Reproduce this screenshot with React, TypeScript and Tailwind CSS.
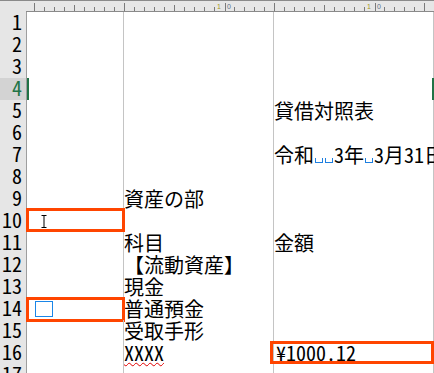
import React from "react";

const FONT = "font-['Noto_Sans_CJK_JP','Noto_Sans',sans-serif]";

function Ruler() {
  const ticks: { x: number; h: number }[] = [];
  for (let k = 0; k < 41; k++) {
    const x = 34 + k * 10 - (k >= 9 ? 0 : 0);
    let h = 4;
    if ([34, 124, 274, 424].includes(x)) h = 8;
    else if ([74, 174, 324].includes(x)) h = 6;
    if (x === 224 || x === 374) continue;
    ticks.push({ x: x === 34 ? 34 : x, h });
  }
  return (
    <svg width="434" height="12" className="block shrink-0">
      <rect x="0" y="0" width="434" height="12" fill="#e6e6e6" />
      <line x1="0" y1="0.5" x2="434" y2="0.5" stroke="#8a8a8a" />
      <line x1="26" y1="11.5" x2="434" y2="11.5" stroke="#8a8a8a" />
      {ticks.map((t) => (
        <line key={t.x} x1={t.x + 0.5} y1={11 - t.h} x2={t.x + 0.5} y2="11" stroke="#7a7a7a" />
      ))}
      {[225, 375].map((x) => (
        <g key={x}>
          <line x1={x + 0.5} y1="3" x2={x + 0.5} y2="11" stroke="#7a7a7a" />
          <text x={x - 8} y="9" fontSize="7" fill="#a89a20" fontFamily="Liberation Sans, sans-serif">1</text>
          <text x={x + 2} y="9" fontSize="7" fill="#5a7088" fontFamily="Liberation Sans, sans-serif">0</text>
        </g>
      ))}
    </svg>
  );
}

function Space() {
  return <span className="inline-block w-[8px] h-[5px] mx-[1px] border-x border-b border-[#1e7fe0]" />;
}

function IBeam() {
  return (
    <svg width="6" height="13" viewBox="0 0 6 13" className="absolute left-[14px] top-[5px]">
      <path d="M0.5 0.5h5M3 0.5v12M0.5 12.5h5" stroke="#000" fill="none" strokeWidth="1" />
    </svg>
  );
}

function Box({ className }: { className: string }) {
  return <div className={`absolute border-[3px] border-[#ff4500] pointer-events-none ${className}`} />;
}

type Row = { n: number; a?: React.ReactNode; b?: React.ReactNode; c?: React.ReactNode; active?: boolean };

const rows: Row[] = [
  { n: 1 },
  { n: 2 },
  { n: 3 },
  { n: 4, active: true },
  { n: 5, c: "貸借対照表" },
  { n: 6 },
  {
    n: 7,
    c: (
      <>
        令和<Space />
        <Space />3年<Space />3月31日
      </>
    ),
  },
  { n: 8 },
  { n: 9, b: "資産の部" },
  {
    n: 10,
    a: (
      <>
        <IBeam />
        <Box className="left-[-1px] top-[-2px] right-[-2px] bottom-0" />
      </>
    ),
  },
  { n: 11, b: "科目", c: "金額" },
  { n: 12, b: "【流動資産】" },
  { n: 13, b: "現金" },
  {
    n: 14,
    a: (
      <>
        <div className="absolute left-[8px] top-[3px] w-[18px] h-[16px] border border-[#1a86e8]" />
        <Box className="left-[-1px] top-[-1px] right-[-2px] bottom-[-2px]" />
      </>
    ),
    b: "普通預金",
  },
  { n: 15, b: "受取手形" },
  {
    n: 16,
    b: <span className="underline decoration-wavy decoration-[#e00000] decoration-1 underline-offset-[1px]">XXXX</span>,
    c: (
      <>
        <span className="pl-[2px]">¥1000.12</span>
        <Box className="left-[-4px] top-[-1px] right-[-1px] bottom-0" />
      </>
    ),
  },
  { n: 17 },
];

export default function App() {
  return (
    <div className={`w-[434px] h-[373px] overflow-hidden bg-white text-black ${FONT} [font-feature-settings:'hwid']`}>
      <Ruler />
      {rows.map((r) => (
        <div key={r.n} className="flex h-[22px]">
          <div
            className={`w-[27px] shrink-0 border-r border-[#9e9e9e] text-right pr-[4px] text-[20px] leading-[19px] ${
              r.active ? "bg-[#d3d3d3] text-[#217346]" : "bg-[#e6e6e6] text-black"
            }`}
          >
            {r.n}
          </div>
          <div className="relative w-[97px] shrink-0 border-r border-[#c4c4c4] text-[20px] leading-[22px] whitespace-nowrap">
            {r.active && <div className="absolute left-0 top-0 w-[2px] h-[22px] bg-[#217346]" />}
            {r.a}
          </div>
          <div className="relative w-[150px] shrink-0 border-r border-[#c4c4c4] text-[20px] leading-[22px] whitespace-nowrap">
            {r.b}
          </div>
          <div className="relative w-[160px] shrink-0 border-r border-[#c4c4c4] text-[20px] leading-[22px] whitespace-nowrap">
            {r.active && <div className="absolute right-[-1px] top-0 w-[2px] h-[22px] bg-[#217346]" />}
            {r.c}
          </div>
        </div>
      ))}
    </div>
  );
}
